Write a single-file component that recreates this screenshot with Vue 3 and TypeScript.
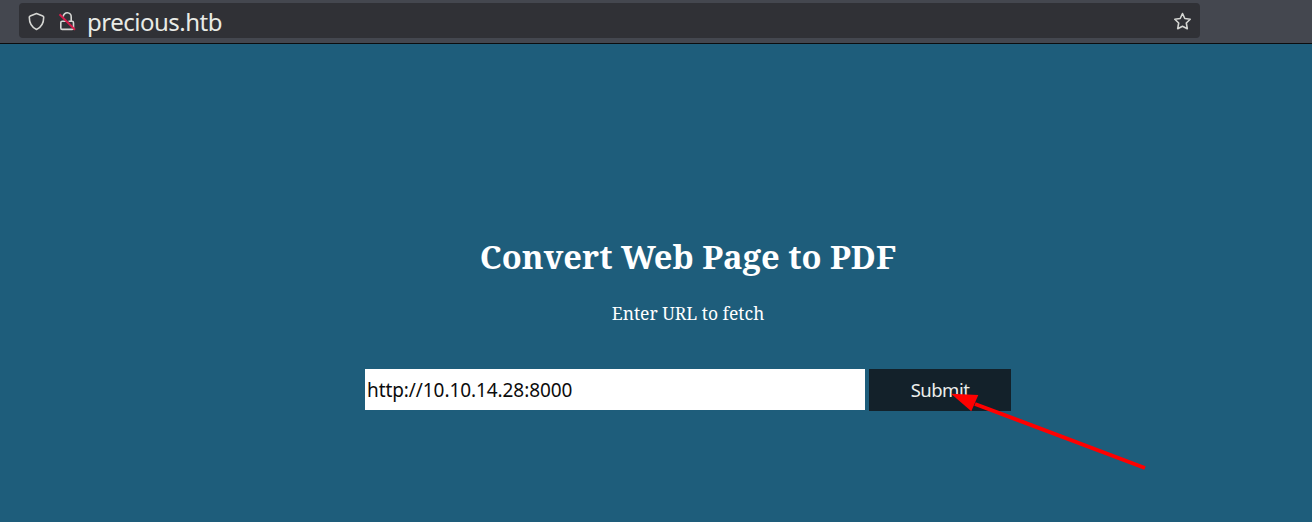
<script setup lang="ts">
import { ref } from 'vue'

const address = 'precious.htb'
const url = ref('http://10.10.14.28:8000')
</script>

<template>
  <div class="browser">
    <header class="toolbar">
      <div class="address-bar">
        <svg class="shield" width="18" height="20" viewBox="0 0 18 20">
          <path d="M9.5 2.5 L15.8 5 Q16.7 5.3 16.7 6.3 C16.7 12.2 14.2 16.4 9.5 18.5 C4.8 16.4 2.3 12.2 2.3 6.3 Q2.3 5.3 3.2 5 Z" />
        </svg>
        <svg class="lock" width="18" height="20" viewBox="0 0 18 20">
          <path d="M5.2 5.6 A4 4 0 0 1 13.2 6 V10.3" />
          <path d="M8 10.3 H4.2 Q2.8 10.3 2.8 11.7 V17 Q2.8 18.4 4.2 18.4 H14.1 Q15.5 18.4 15.5 17 V11.7 Q15.5 10.3 14.1 10.3 H10.5" />
          <path class="slash" d="M1.5 3.3 L17 18.8" />
        </svg>
        <span class="address">{{ address }}</span>
        <svg class="star" width="20" height="20" viewBox="0 0 20 20">
          <path d="M10.5 2.5 L12.8 7.5 L18.2 8.2 L14.3 12 L15.3 17.7 L10.5 15.2 L5.7 17.7 L6.7 12 L2.8 8.2 L8.2 7.5 Z" />
        </svg>
      </div>
    </header>
    <main class="page">
      <h1>Convert Web Page to PDF</h1>
      <p>Enter URL to fetch</p>
      <form @submit.prevent>
        <input v-model="url" type="text" spellcheck="false" />
        <button type="submit">Submit</button>
      </form>
    </main>
    <svg class="arrow" width="210" height="90" viewBox="0 0 210 90">
      <path d="M25 14 L195 78" />
      <polygon points="1,3.7 28.3,5 21.3,21.2" />
    </svg>
  </div>
</template>

<style>
body {
  margin: 0;
  overflow: hidden;
}
</style>

<style scoped>
.browser {
  position: relative;
  display: flex;
  flex-direction: column;
  width: 1312px;
  height: 522px;
  overflow: hidden;
  background: #1e5d7b;
}
.toolbar {
  box-sizing: border-box;
  flex: none;
  height: 44px;
  padding: 3px 0 0 19px;
  background: #44474f;
  border-bottom: 1px solid #0c0c0d;
}
.address-bar {
  box-sizing: border-box;
  display: flex;
  align-items: center;
  width: 1181px;
  height: 35px;
  padding: 0 8px;
  border-radius: 4px;
  background: #303136;
}
.address-bar svg {
  flex: none;
  fill: none;
  stroke: #d5d6d3;
  stroke-width: 1.6;
  stroke-linejoin: round;
}
.lock {
  margin-left: 13px;
}
.address-bar .lock .slash {
  stroke: #d81b4a;
  stroke-width: 2;
}
.address {
  margin-left: 11px;
  padding-top: 2px;
  color: #e9ebe6;
  font: 24px/33px 'Noto Sans', sans-serif;
  letter-spacing: -0.5px;
  white-space: nowrap;
}
.star {
  margin-left: auto;
}
.page {
  display: flex;
  flex-direction: column;
  align-items: center;
  width: 1376px;
  color: #fff;
  font-family: 'Noto Serif', 'DejaVu Serif', serif;
}
h1 {
  margin: 191px 0 0;
  font-size: 32.7px;
  line-height: 44px;
  white-space: nowrap;
}
p {
  margin: 22px 0 0;
  font-size: 17.5px;
  line-height: 24px;
}
form {
  display: flex;
  gap: 4px;
  margin-top: 44px;
}
input {
  box-sizing: border-box;
  width: 500px;
  height: 41px;
  padding: 0 2px;
  border: 0;
  border-radius: 0;
  outline: 0;
  background: #fff;
  color: #0c0c0c;
  font: 19px 'Noto Sans', sans-serif;
  letter-spacing: -0.08px;
}
button {
  width: 142px;
  height: 42px;
  padding: 0 0 1px;
  border: 0;
  background: #13212a;
  color: #eceeec;
  font: 18.5px 'Noto Sans', sans-serif;
  letter-spacing: -0.5px;
}
.arrow {
  position: absolute;
  left: 950px;
  top: 390px;
}
.arrow path {
  stroke: #f00;
  stroke-width: 4;
}
.arrow polygon {
  fill: #f00;
}
</style>
